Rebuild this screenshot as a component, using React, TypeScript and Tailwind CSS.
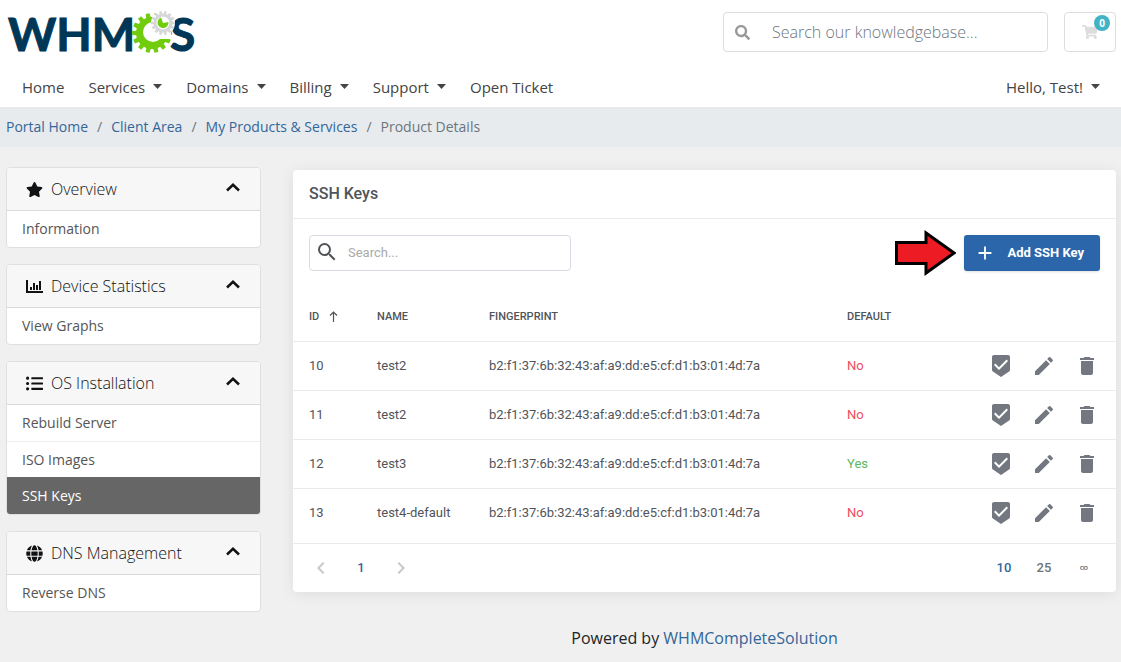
import { useState } from 'react';
import { FaGlobe, FaListUl, FaSearch, FaShoppingCart, FaStar } from 'react-icons/fa';
import { MdAdd, MdBeenhere, MdChevronLeft, MdChevronRight, MdDelete, MdEdit, MdSearch } from 'react-icons/md';

const navItems = [
  { label: 'Home', dropdown: false },
  { label: 'Services', dropdown: true },
  { label: 'Domains', dropdown: true },
  { label: 'Billing', dropdown: true },
  { label: 'Support', dropdown: true },
  { label: 'Open Ticket', dropdown: false },
];

const breadcrumbs = ['Portal Home', 'Client Area', 'My Products & Services'];

const panels = [
  { title: 'Overview', Icon: FaStar, items: ['Information'] },
  { title: 'Device Statistics', Icon: BarChart, items: ['View Graphs'] },
  { title: 'OS Installation', Icon: FaListUl, items: ['Rebuild Server', 'ISO Images', 'SSH Keys'] },
  { title: 'DNS Management', Icon: FaGlobe, items: ['Reverse DNS'] },
];

const fingerprint = 'b2:f1:37:6b:32:43:af:a9:dd:e5:cf:d1:b3:01:4d:7a';

const sshKeys = [
  { id: 10, name: 'test2', isDefault: false },
  { id: 11, name: 'test2', isDefault: false },
  { id: 12, name: 'test3', isDefault: true },
  { id: 13, name: 'test4-default', isDefault: false },
];

// outline of a gear with flat teeth
function gearPath(cx: number, cy: number, outer: number, root: number, teeth: number) {
  const step = (Math.PI * 2) / teeth;
  const points: string[] = [];
  for (let i = 0; i < teeth; i++) {
    const a = i * step;
    const corners = [
      [root, -0.32],
      [outer, -0.22],
      [outer, 0.22],
      [root, 0.32],
    ];
    corners.forEach(([r, t]) => {
      points.push(`${(cx + r * Math.cos(a + t * step)).toFixed(2)} ${(cy + r * Math.sin(a + t * step)).toFixed(2)}`);
    });
  }
  return `M${points.join('L')}Z`;
}

function Logo() {
  return (
    <svg width="200" height="66" viewBox="0 -10 200 66" role="img" aria-label="WHMCS">
      <g className="fill-[#003656] stroke-[#003656] stroke-1 font-['Lato',sans-serif] text-[46px] font-bold">
        <text x="2" y="41">WHM</text>
        <text x="164" y="41">S</text>
      </g>
      <path d={gearPath(146, 23, 20, 16, 14)} fill="#70cc0d" />
      <circle cx="147" cy="22" r="10" fill="#fff" />
      <path d="M147 20L165 16L165 29H152Z" fill="#fff" />
      <circle cx="157" cy="13" r="12" fill="#fff" />
      <path d={gearPath(157, 13, 12, 9.5, 14)} fill="#d5d7d8" />
      <circle cx="157" cy="13" r="6.500" fill="#fff" />
      <path d="M155 7.500A5.500 5.500 0 1 0 162.500 12L157 13Z" fill="#70cc0d" />
    </svg>
  );
}

function Caret() {
  return (
    <svg width="9" height="5" viewBox="0 0 9 5" fill="currentColor">
      <path d="M0 0H9L4.500 5Z" />
    </svg>
  );
}

function Header() {
  return (
    <header className="bg-white pl-[6px] pr-[5px]">
      <div className="flex h-[54px] items-start justify-between">
        <a href="#"><Logo /></a>
        <div className="flex gap-4 pt-3">
          <form className="flex h-10 w-[325px] items-center rounded border border-[#ddd]">
            <button type="button" aria-label="Search" className="px-[11px] text-[15px] text-[#999]">
              <FaSearch />
            </button>
            <input
              type="text"
              aria-label="Search our knowledgebase"
              placeholder="Search our knowledgebase..."
              className="min-w-0 flex-1 px-[11px] text-base font-light text-[#495057] outline-none placeholder:text-[#6c757d]"
            />
          </form>
          <a href="#" aria-label="Shopping cart" className="relative flex h-10 w-[52px] items-center justify-center rounded border border-[#ddd] text-base text-[#ddd]">
            <FaShoppingCart />
            <span className="absolute right-[5px] top-[2px] flex size-4 items-center justify-center rounded-full bg-[#42b3c5] text-[10px] font-bold text-white">0</span>
          </a>
        </div>
      </div>
      <nav className="flex h-[53px] items-center justify-between pt-3 text-[15px] leading-6 text-[#444]">
        <ul className="flex gap-6 pl-4">
          {navItems.map((item) => (
            <li key={item.label}>
              <a href="#" className="flex items-center gap-2">
                {item.label}
                {item.dropdown && <Caret />}
              </a>
            </li>
          ))}
        </ul>
        <a href="#" className="flex items-center gap-2 pr-4">
          Hello, Test!
          <Caret />
        </a>
      </nav>
    </header>
  );
}

function BarChart({ className }: { className?: string }) {
  return (
    <svg className={className} width="17" height="13" viewBox="0 0 17 13" fill="currentColor">
      <path d="M0 0H2V11H17V13H0ZM4 7H6V10H4ZM7 3H9V10H7ZM10 5H12V10H10ZM13 1H15V10H13Z" />
    </svg>
  );
}

function Chevron() {
  return (
    <svg className="mb-[3px]" width="14" height="9" viewBox="0 0 14 9" fill="none" stroke="currentColor" strokeWidth="2.500">
      <path d="M1 7.500L7 1.800L13 7.500" />
    </svg>
  );
}

function Sidebar() {
  return (
    <aside className="flex w-[255px] shrink-0 flex-col gap-4">
      {panels.map(({ title, Icon, items }) => (
        <section key={title} className="overflow-hidden rounded border border-[#dfdfdf] bg-white">
          <button type="button" className="flex h-[43px] w-full items-center border-b border-[#dadada] bg-[#f7f7f7] pl-[19px] pr-5 text-[#101214]">
            <Icon className="mr-2 text-[17px]" />
            <span className="flex-1 text-left text-base font-light">{title}</span>
            <Chevron />
          </button>
          <ul className="text-sm">
            {items.map((item) => (
              <li key={item} className="group">
                <a
                  href="#"
                  className={
                    item === 'SSH Keys'
                      ? '-mt-[2px] flex h-[37px] items-center bg-[#666] px-[15px] text-white'
                      : 'flex h-[37px] items-center border-b border-[#eee] px-[15px] text-[#555] group-last:h-9 group-last:border-b-0'
                  }
                >
                  {item}
                </a>
              </li>
            ))}
          </ul>
        </section>
      ))}
    </aside>
  );
}

function Arrow() {
  return (
    <svg className="absolute right-full top-1/2 mr-2 -translate-y-1/2" width="62" height="46" viewBox="0 0 62 46">
      <path d="M2.500 12.500H32V3L60 23L32 43V33.500H2.500Z" fill="#ed1c24" stroke="#000" strokeWidth="3" />
    </svg>
  );
}

function KeysTable({ query }: { query: string }) {
  const rows = sshKeys.filter((key) => key.name.includes(query));

  return (
    <table className="w-full table-fixed text-left text-[13px] text-[#505459]">
      <thead className="text-[11px] uppercase">
        <tr className="h-[50px] border-b border-[#e9ebee]">
          <th className="w-[68px] pl-4 pt-0.5 font-medium">
            <span className="flex items-center gap-[10px]">
              ID
              <svg width="9" height="11" viewBox="0 0 9 11" fill="none" stroke="currentColor" strokeWidth="1.200">
                <path d="M4.500 11V1M1 4.500L4.500 1L8 4.500" />
              </svg>
            </span>
          </th>
          <th className="w-28 pl-4 pt-0.5 font-medium">Name</th>
          <th className="pl-4 pt-0.5 font-medium">Fingerprint</th>
          <th className="w-[145px] pl-4 pt-0.5 font-medium">Default</th>
          <th className="w-[140px]" aria-label="Actions" />
        </tr>
      </thead>
      <tbody className="divide-y divide-[#e9ebee]">
        {rows.map((key) => (
          <tr key={key.id} className="h-[49px]">
            <td className="pl-4">{key.id}</td>
            <td className="pl-4">{key.name}</td>
            <td className="pl-4">{fingerprint}</td>
            <td className={key.isDefault ? 'pl-4 text-[#5cb85c]' : 'pl-4 text-[#ef4d5e]'}>{key.isDefault ? 'Yes' : 'No'}</td>
            <td className="pr-[17px]">
              <div className="flex justify-end gap-[19px] text-2xl text-[#737780]">
                <button type="button" aria-label="Set as default"><MdBeenhere /></button>
                <button type="button" aria-label="Edit"><MdEdit /></button>
                <button type="button" aria-label="Delete"><MdDelete /></button>
              </div>
            </td>
          </tr>
        ))}
      </tbody>
    </table>
  );
}

export default function App() {
  const [query, setQuery] = useState('');

  return (
    <div className="min-h-screen bg-[#f0f0f0] font-['Open_Sans',sans-serif]">
      <Header />
      <nav aria-label="Breadcrumb" className="flex h-10 items-center bg-[#e7ebee] px-[6px] text-sm text-[#6c757d]">
        {breadcrumbs.map((crumb) => (
          <span key={crumb}>
            <a href="#" className="text-[#336699]">{crumb}</a>
            <span className="px-[9px]">/</span>
          </span>
        ))}
        <span>Product Details</span>
      </nav>
      <div className="flex items-start gap-8 pl-[6px] pr-[5px] pt-5">
        <Sidebar />
        <main className="min-w-0 flex-1 pt-[3px]">
          <section className="rounded-sm bg-white font-['Roboto',sans-serif] shadow-[0_2px_15px_rgba(0,0,0,0.08)]">
            <h1 className="flex h-[49px] items-center border-b border-[#e9ebee] px-4 text-base font-medium text-[#505459]">SSH Keys</h1>
            <div className="flex items-center justify-between px-4 pb-5 pt-4">
              <label className="flex h-9 w-[262px] items-center rounded-sm border border-[#d9d9e3]">
                <MdSearch className="mx-[5px] mb-[3px] text-2xl text-[#505459]" />
                <input
                  type="text"
                  aria-label="Search"
                  placeholder="Search..."
                  value={query}
                  onChange={(e) => setQuery(e.target.value)}
                  className="min-w-0 flex-1 px-1 text-[13px] text-[#505459] outline-none placeholder:text-[#aaa]"
                />
              </label>
              <div className="relative">
                <Arrow />
                <button type="button" className="flex h-9 items-center gap-[11px] rounded-[3px] bg-[#2c66aa] pl-[10px] pr-4 text-[13px] font-bold text-white shadow">
                  <MdAdd className="text-[22px]" />
                  Add SSH Key
                </button>
              </div>
            </div>
            <KeysTable query={query} />
            <div className="mt-[6px] flex h-[49px] items-center justify-between border-t border-[#e9ebee] pb-px pl-4 pr-3 text-[13px] font-medium text-[#6f7378]">
              <div className="flex items-center">
                <button type="button" aria-label="Previous page" className="text-2xl text-[#c8c8c8]"><MdChevronLeft /></button>
                <button type="button" className="w-14 text-[#336699]">1</button>
                <button type="button" aria-label="Next page" className="text-2xl text-[#c8c8c8]"><MdChevronRight /></button>
              </div>
              <div className="flex">
                <button type="button" className="w-10 text-[#336699]">10</button>
                <button type="button" className="w-10">25</button>
                <button type="button" className="w-10 text-[8px]">∞</button>
              </div>
            </div>
          </section>
          <footer className="pb-3 pt-[34px] text-center text-base text-[#212529]">
            Powered by <a href="#" className="text-[#336699]">WHMCompleteSolution</a>
          </footer>
        </main>
      </div>
    </div>
  );
}
